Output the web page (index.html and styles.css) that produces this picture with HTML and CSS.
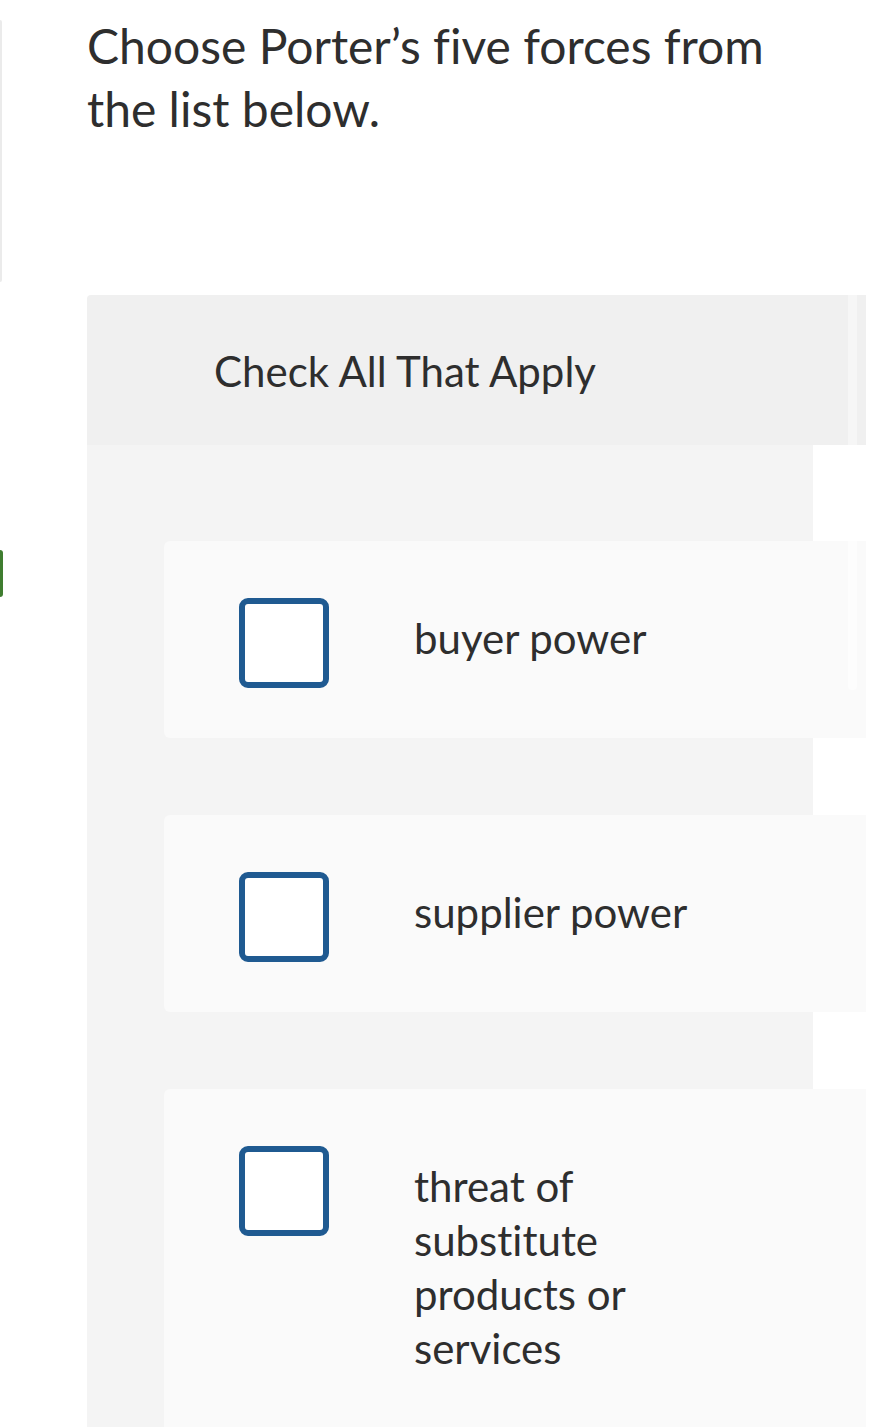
FILE: index.html
```html
<!DOCTYPE html>
<html lang="en">
<head>
<meta charset="utf-8">
<title>Check All That Apply</title>
<link rel="stylesheet" href="styles.css">
</head>
<body>
<div class="page">
  <div class="rail">
    <div class="rail-card"></div>
    <div class="rail-marker"></div>
  </div>
  <main class="main">
    <p class="question">Choose Porter’s five forces from the list below.</p>
    <div class="prompt">
      <span class="prompt-text">Check All That Apply</span>
      <span class="prompt-strip"></span>
      <span class="prompt-end"></span>
    </div>
    <div class="answers">
      <label class="choice">
        <span class="box"></span>
        <span class="choice-text">buyer power</span>
        <span class="choice-strip"></span>
      </label>
      <label class="choice">
        <span class="box"></span>
        <span class="choice-text">supplier power</span>
      </label>
      <label class="choice">
        <span class="box"></span>
        <span class="choice-text">threat of substitute products or services</span>
      </label>
    </div>
  </main>
</div>
</body>
</html>
```

FILE: styles.css
```css
html, body {
  margin: 0;
  padding: 0;
  background: #ffffff;
}

body {
  font-family: "Lato", "Open Sans", sans-serif;
  font-variant-ligatures: none;
  font-feature-settings: "liga" 0, "clig" 0, "dlig" 0;
  color: #2e2e2e;
  overflow: hidden;
}

.page {
  display: flex;
  align-items: flex-start;
  width: 895px;
  height: 1427px;
  overflow: hidden;
}

.rail {
  width: 3px;
  flex: none;
  display: flex;
  flex-direction: column;
}

.rail-card {
  margin-top: 20px;
  height: 262px;
  width: 0;
  border-right: 2px solid #ebebeb;
  border-radius: 0 8px 8px 0;
}

.rail-marker {
  margin-top: 268px;
  height: 47px;
  width: 3px;
  background: #3f7d30;
  border-radius: 0 4px 4px 0;
}

.main {
  margin-left: 84px;
  width: 779px;
  flex: none;
}

.question {
  margin: 14px 0 0;
  font-size: 48px;
  line-height: 63px;
  width: 700px;
}

.prompt {
  margin-top: 155px;
  height: 150px;
  background: #f0f0f0;
  display: grid;
  grid-template-columns: 1fr 9px 9px;
  border-radius: 4px 0 0 0;
}

.prompt-text {
  align-self: center;
  padding-left: 127px;
  padding-top: 2px;
  font-size: 42px;
}

.prompt-strip {
  background: #f6f6f6;
}

.answers {
  width: 726px;
  background: #f4f4f4;
  padding: 96px 0 0 77px;
  box-sizing: border-box;
  display: flex;
  flex-direction: column;
  gap: 77px;
}

.choice {
  position: relative;
  width: 702px;
  box-sizing: border-box;
  background: #fafafa;
  border-radius: 6px 0 0 6px;
  padding: 57px 0 50px 75px;
  display: flex;
  align-items: flex-start;
}

.choice:last-child {
  padding-bottom: 70px;
}

.box {
  flex: none;
  width: 90px;
  height: 90px;
  box-sizing: border-box;
  border: 6px solid #1f5a91;
  border-radius: 9px;
  background: #ffffff;
}

.choice-text {
  margin-left: 85px;
  margin-top: 13px;
  width: 305px;
  font-size: 42px;
  line-height: 54px;
}

.choice-strip {
  position: absolute;
  top: 0;
  right: 9px;
  width: 9px;
  height: 149px;
  background: #fdfdfd;
  border-radius: 0 0 4px 4px;
}
```
